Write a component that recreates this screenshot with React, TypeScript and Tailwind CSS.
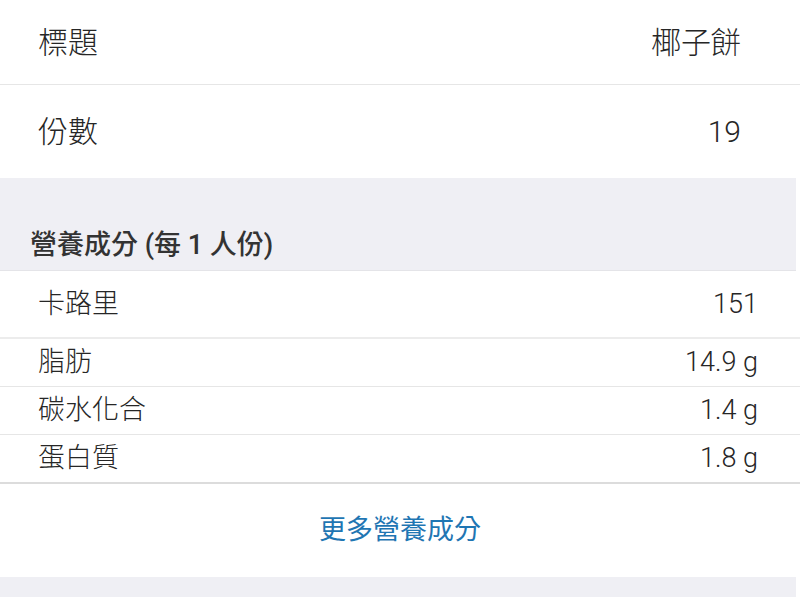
import React from 'react';

const font = { fontFamily: 'Roboto, "Noto Sans CJK TC", sans-serif' };

interface Nutrient {
    label: string;
    value: string;
}

const nutrients: Nutrient[] = [
    { label: '脂肪', value: '14.9 g' },
    { label: '碳水化合', value: '1.4 g' },
    { label: '蛋白質', value: '1.8 g' },
];

export default function App() {
    return (
        <div className="w-[800px] h-[597px] overflow-hidden bg-white text-[#262626]" style={font}>
            <div className="flex items-center justify-between h-[85px] pl-[38px] pr-[59px] border-b border-[#e6e6e6] text-[30px] font-light">
                <span>標題</span>
                <span>椰子餅</span>
            </div>
            <div className="flex items-center justify-between h-[93px] pl-[38px] pr-[59px] text-[30px] font-light">
                <span>份數</span>
                <span>19</span>
            </div>

            <div className="flex items-end h-[93px] mr-[4px] pl-[30px] pb-[5px] bg-[#efeff4] border-b border-[#e4e4e8]">
                <span className="text-[27px] font-medium text-[#333]">營養成分 (每 1 人份)</span>
            </div>

            <div className="flex items-center justify-between h-[68px] pl-[38px] pr-[42px] border-b-2 border-[#ececec] text-[27px] font-light">
                <span>卡路里</span>
                <span>151</span>
            </div>
            {nutrients.map((n, i) => (
                <div
                    key={n.label}
                    className={
                        i === nutrients.length - 1
                            ? 'flex items-center justify-between h-[49px] pl-[38px] pr-[42px] border-b-2 border-[#dcdcdc] text-[27px] font-light'
                            : 'flex items-center justify-between h-[48px] pl-[38px] pr-[42px] border-b border-[#e6e6e6] text-[27px] font-light'
                    }
                >
                    <span>{n.label}</span>
                    <span>{n.value}</span>
                </div>
            ))}

            <div className="flex items-center justify-center h-[93px] text-[27px] text-[#1f76b3]">
                更多營養成分
            </div>
            <div className="h-[30px] mr-[4px] bg-[#efeff4]" />
        </div>
    );
}
